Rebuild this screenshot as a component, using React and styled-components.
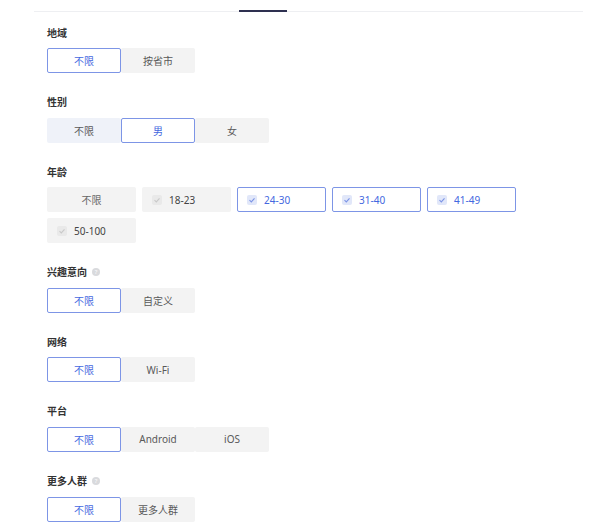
import React from 'react';
import styled, { createGlobalStyle } from 'styled-components';

const GlobalStyle = createGlobalStyle`
  body {
    margin: 0;
    background: #fff;
    font-family: "Noto Sans", "Noto Sans CJK SC", sans-serif;
  }
`;

const segmented = [
  { title: '地域', options: ['不限', '按省市'], active: 0 },
  { title: '性别', options: ['不限', '男', '女'], active: 1, hover: 0 }
];

const ages = [
  { label: '不限' },
  { label: '18-23', check: true },
  { label: '24-30', check: true, active: true },
  { label: '31-40', check: true, active: true },
  { label: '41-49', check: true, active: true },
  { label: '50-100', check: true }
];

const rest = [
  { title: '兴趣意向', help: true, options: ['不限', '自定义'], active: 0 },
  { title: '网络', options: ['不限', 'Wi-Fi'], active: 0 },
  { title: '平台', options: ['不限', 'Android', 'iOS'], active: 0 },
  { title: '更多人群', help: true, options: ['不限', '更多人群'], active: 0 }
];

function Check({ active }) {
  return (
    <CheckBox $active={active}>
      <svg width="8" height="8" viewBox="0 0 8 8">
        <path
          d="M1.5 4.2 L3.3 5.9 L6.5 2.3"
          fill="none"
          stroke={active ? '#7d95e6' : '#c9c9c9'}
          strokeWidth="1.1"
        />
      </svg>
    </CheckBox>
  );
}

function SegmentSection({ item }) {
  return (
    <Section>
      <Title>
        {item.title}
        {item.help && <Help>?</Help>}
      </Title>
      <Group>
        {item.options.map((opt, i) => (
          <Option key={opt} $active={i === item.active} $hover={i === item.hover}>
            {opt}
          </Option>
        ))}
      </Group>
    </Section>
  );
}

function App() {
  return (
    <Page>
      <GlobalStyle />
      <TabBar>
        <Indicator />
      </TabBar>
      <Form>
        {segmented.map((item) => (
          <SegmentSection key={item.title} item={item} />
        ))}
        <Section>
          <Title>年龄</Title>
          <AgeGroup>
            {ages.map((age) => (
              <AgeOption key={age.label} $active={age.active} $check={age.check}>
                {age.check && <Check active={age.active} />}
                {age.label}
              </AgeOption>
            ))}
          </AgeGroup>
        </Section>
        {rest.map((item) => (
          <SegmentSection key={item.title} item={item} />
        ))}
      </Form>
    </Page>
  );
}

const Page = styled.div`
  padding: 0 8px 0 34px;
`;

const TabBar = styled.div`
  height: 11px;
  border-bottom: 1px solid #eeeff2;
  display: flex;
  align-items: flex-end;
  padding-left: 205px;
`;

const Indicator = styled.div`
  width: 48px;
  height: 2px;
  margin-bottom: -1px;
  background: #2e3050;
`;

const Form = styled.div`
  padding: 12px 0 0 13px;
`;

const Section = styled.div`
  margin-bottom: 20.6px;
`;

const Title = styled.div`
  display: flex;
  align-items: center;
  gap: 5px;
  height: 16px;
  margin-bottom: 8px;
  font-size: 10px;
  font-weight: 700;
  color: #333;
`;

const Help = styled.span`
  width: 8px;
  height: 8px;
  border-radius: 50%;
  background: #d9dadd;
  color: #fff;
  font-size: 6px;
  line-height: 8px;
  text-align: center;
  font-weight: 400;
`;

const Group = styled.div`
  display: flex;
`;

const Option = styled.div`
  box-sizing: border-box;
  width: 74px;
  height: 25px;
  display: flex;
  align-items: center;
  justify-content: center;
  font-size: 10px;
  border-radius: 2px;
  border: 1px solid ${(p) => (p.$active ? '#7d95e6' : 'transparent')};
  background: ${(p) => (p.$active ? '#fff' : p.$hover ? '#eff2f9' : '#f3f3f3')};
  color: ${(p) => (p.$active ? '#4468e0' : '#595959')};
`;

const AgeGroup = styled.div`
  display: flex;
  flex-wrap: wrap;
  gap: 6px;
`;

const AgeOption = styled.div`
  box-sizing: border-box;
  width: 89px;
  height: 25px;
  display: flex;
  align-items: center;
  justify-content: ${(p) => (p.$check ? 'flex-start' : 'center')};
  padding-left: ${(p) => (p.$check ? '9px' : '0')};
  gap: 7px;
  font-size: 10px;
  border-radius: 2px;
  border: 1px solid ${(p) => (p.$active ? '#7d95e6' : 'transparent')};
  background: ${(p) => (p.$active ? '#fff' : '#f3f3f3')};
  color: ${(p) => (p.$active ? '#4468e0' : p.$check ? '#444' : '#666')};
`;

const CheckBox = styled.span`
  width: 10px;
  height: 10px;
  border-radius: 2px;
  display: flex;
  align-items: center;
  justify-content: center;
  background: ${(p) => (p.$active ? '#e1e7f9' : '#e9e9e9')};
`;

export default App;
